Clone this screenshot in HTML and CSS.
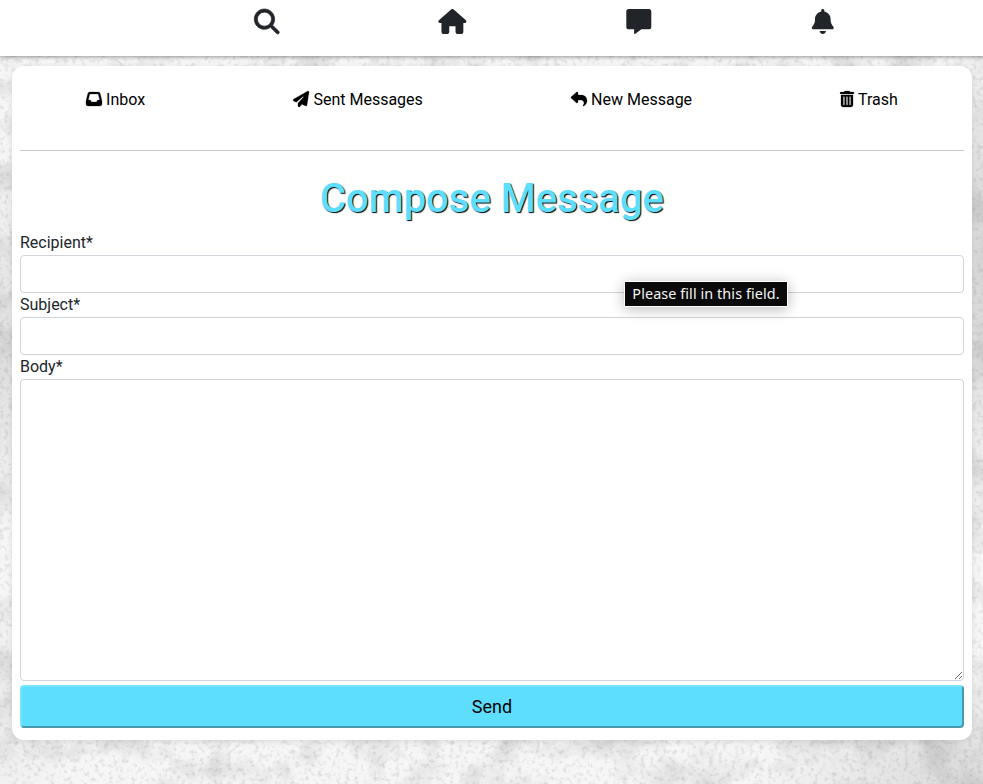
FILE: index.html
```html
<!DOCTYPE html>
<html lang="en">
<head>
<meta charset="utf-8">
<title>Compose Message</title>
<link rel="stylesheet" href="styles.css">
</head>
<body>
<svg class="texture" aria-hidden="true">
  <filter id="grain" x="0" y="0" width="100%" height="100%" color-interpolation-filters="sRGB">
    <feTurbulence type="fractalNoise" baseFrequency="0.025" numOctaves="5" seed="8" result="cloud"/>
    <feColorMatrix in="cloud" type="matrix" values="0 0 0 0 .4  0 0 0 0 .4  0 0 0 0 .4  .5 0 0 0 -.23" result="soft"/>
    <feTurbulence type="fractalNoise" baseFrequency="0.22" numOctaves="3" seed="3" result="fine"/>
    <feColorMatrix in="fine" type="matrix" values="0 0 0 0 .4  0 0 0 0 .4  0 0 0 0 .4  .5 0 0 0 -.25" result="specks"/>
    <feMerge><feMergeNode in="soft"/><feMergeNode in="specks"/></feMerge>
  </filter>
  <rect width="100%" height="100%" filter="url(#grain)"/>
</svg>
<header class="topbar">
  <nav class="topnav">
    <a><svg class="search" viewBox="0 0 512 512"><path d="M416 208c0 45.900-14.900 88.300-40 122.700L502.600 457.400c12.500 12.500 12.500 32.800 0 45.300s-32.800 12.500-45.300 0L330.700 376c-34.400 25.200-76.800 40-122.700 40C93.100 416 0 322.900 0 208S93.100 0 208 0S416 93.100 416 208zM208 352a144 144 0 1 0 0-288 144 144 0 1 0 0 288z"/></svg></a>
    <a><svg class="wide" viewBox="0 0 576 512"><path d="M309 7 565 231c20 18 9 57-21 57h-32v176c0 27-21 48-48 48h-64c-26 0-48-21-48-48V352H224v112c0 27-22 48-48 48h-64c-27 0-48-21-48-48V288H32c-30 0-43-37-21-57L267 7c12-10 30-10 42 0z"/></svg></a>
    <a><svg viewBox="0 0 512 512"><path d="M48 0C20 0 0 20 0 48V368c0 28 20 48 48 48h112v80c0 6.100 3.400 11.600 8.800 14.300s11.900 2.100 16.800-1.500L309.300 416H464c28 0 48-20 48-48V48c0-28-20-48-48-48H48z"/></svg></a>
    <a><svg viewBox="-32 0 512 512"><path d="M224 0c-17.700 0-32 14.300-32 32V51.200C119 66 64 130.600 64 208v18.800c0 47-17.300 92.400-48.500 127.600l-7.400 8.300c-8.400 9.400-10.400 22.900-5.300 34.400S19.400 416 32 416H416c12.600 0 24-7.400 29.200-18.900s3.100-25-5.300-34.400l-7.400-8.300C401.300 319.200 384 273.900 384 226.800V208c0-77.400-55-142-128-156.800V32c0-17.700-14.300-32-32-32zm45.300 493.300c12-12 18.700-28.300 18.700-45.300H224 160c0 17 6.700 33.300 18.700 45.300s28.300 18.700 45.300 18.700s33.300-6.700 45.300-18.700z"/></svg></a>
  </nav>
</header>
<main class="card">
  <nav class="mailnav">
    <a><svg viewBox="0 0 512 512"><path d="M121 32C91.600 32 66 52 58.900 80.500L1.900 308.400C.6 313.500 0 318.700 0 323.900V416c0 35.300 28.700 64 64 64H448c35.300 0 64-28.700 64-64V323.900c0-5.200-.6-10.400-1.900-15.500l-57-227.900C446 52 420.400 32 391 32H121zm0 64H391l48 192H387.800c-12.100 0-23.200 6.800-28.600 17.700l-14.300 28.600c-5.400 10.800-16.500 17.700-28.600 17.700H195.800c-12.100 0-23.200-6.800-28.600-17.700l-14.300-28.600c-5.400-10.800-16.500-17.700-28.600-17.700H73L121 96z"/></svg> Inbox</a>
    <a><svg viewBox="0 0 512 512"><path d="M498.100 5.600c10.100 7 15.400 19.100 13.500 31.200l-64 416c-1.500 9.700-7.400 18.200-16 23s-18.900 5.400-28 1.600L284 427.700l-68.500 74.100c-8.900 9.700-22.900 12.900-35.200 8.100S160 493.200 160 480V396.400c0-4 1.500-7.800 4.200-10.700L331.800 202.800c5.800-6.300 5.600-16-.4-22s-15.700-6.400-22-.7L106 360.800 17.700 316.600C7.100 311.300 .3 300.700 0 288.900s5.900-22.800 16.100-28.700l448-256c10.700-6.100 23.900-5.500 34 1.400z"/></svg> Sent Messages</a>
    <a><svg viewBox="0 0 512 512"><path d="M205 34.800c11.500 5.100 19 16.600 19 29.200v64H336c97.200 0 176 78.800 176 176c0 113.300-81.500 163.900-100.200 174.100c-2.500 1.400-5.300 1.900-8.100 1.900c-10.900 0-19.700-8.900-19.700-19.700c0-7.500 4.300-14.400 9.800-19.500c9.400-8.800 22.200-26.400 22.200-56.700c0-53-43-96-96-96H224v64c0 12.600-7.400 24.100-19 29.200s-25 3-34.400-5.400l-160-144C3.900 225.700 0 217.100 0 208s3.900-17.700 10.600-23.800l160-144c9.400-8.500 22.900-10.600 34.400-5.400z"/></svg> New Message</a>
    <a><svg class="narrow" viewBox="0 0 448 512"><path fill-rule="evenodd" d="M136 18c5-11 17-18 29-18h118c12 0 24 7 29 18l8 14h96c18 0 32 14 32 32s-14 32-32 32H32C14 96 0 82 0 64s14-32 32-32h96zM32 128h384v320c0 35-29 64-64 64H96c-35 0-64-29-64-64zM104 188v250c0 20 44 20 44 0V188c0-20-44-20-44 0zM202 188v250c0 20 44 20 44 0V188c0-20-44-20-44 0zM300 188v250c0 20 44 20 44 0V188c0-20-44-20-44 0z"/></svg> Trash</a>
  </nav>
  <hr>
  <h1>Compose Message</h1>
  <form>
    <label for="recipient">Recipient*</label>
    <div class="field">
      <input id="recipient" type="text">
      <div class="tooltip" role="tooltip">Please fill in this field.</div>
    </div>
    <label for="subject">Subject*</label>
    <input id="subject" type="text">
    <label for="body">Body*</label>
    <textarea id="body"></textarea>
    <button type="button">Send</button>
  </form>
</main>
</body>
</html>
```
FILE: styles.css
```css
* { box-sizing: border-box; }
html, body { height: 100%; }
body {
  margin: 0;
  overflow: hidden;
  font: 16px/24px Roboto, "Liberation Sans", sans-serif;
  color: #212529;
  background:
    radial-gradient(ellipse 45px 190px at 0 350px, rgba(0,0,0,.1), transparent),
    radial-gradient(ellipse 90px 110px at 0 710px, rgba(0,0,0,.05), transparent),
    radial-gradient(ellipse 230px 120px at 100% 100%, rgba(0,0,0,.12), transparent),
    radial-gradient(ellipse 40px 260px at 100% 260px, rgba(0,0,0,.14), transparent),
    #f6f6f6;
}
.texture {
  position: absolute;
  inset: 0;
  width: 100%;
  height: 100%;
  z-index: -1;
}
.topbar {
  height: 56px;
  padding-top: 9px;
  background: #fff;
  box-shadow: 0 1px 4px rgba(0,0,0,.4);
}
.topnav {
  display: grid;
  grid-template-columns: repeat(3, 186px) 183px;
  margin-left: 173.400px;
}
.topnav a { display: flex; justify-content: center; }
.topnav svg { width: 25.600px; height: 25px; fill: #212529; overflow: visible; }
.topnav .wide { width: 28.800px; }
.topnav .search { stroke: #212529; stroke-width: 14; }
.card {
  width: 960px;
  height: 674px;
  margin: 10px 0 0 12px;
  padding: 0 8px;
  background: #fff;
  border-radius: 12px;
  box-shadow: 0 2px 6px rgba(0,0,0,.1);
}
.mailnav {
  display: flex;
  justify-content: space-around;
  height: 84px;
  margin: 0 -8px;
  padding-top: 22px;
  color: #000;
}
.mailnav a { white-space: nowrap; }
.mailnav svg { width: 16px; height: 16px; vertical-align: -2px; stroke: #000; stroke-width: 8; overflow: visible; }
.mailnav .narrow { width: 14px; }
hr { margin: 0; border: 0; border-top: 1px solid #c8c9ca; }
h1 {
  margin: 24px 0 8px;
  font-size: 40px;
  line-height: 48px;
  font-weight: 500;
  text-align: center;
  color: #5ddeff;
  text-shadow: 1px 1px 1px #000;
}
label { display: block; }
form label { height: 24px; }
input, textarea {
  display: block;
  width: 100%;
  height: 38px;
  padding: 6px 12px;
  border: 1px solid #ced4da;
  border-radius: 4px;
  background: #fff;
  font: inherit;
}
input { outline: 0; }
textarea { height: 302px; }
.field { position: relative; }
.tooltip {
  position: absolute;
  left: 604px;
  top: 26px;
  width: 164px;
  height: 26px;
  border: 1px solid #fff;
  background: #0a0a0a;
  color: #f5f5f5;
  font: 14.400px/24px "Noto Sans", sans-serif;
  text-align: center;
  letter-spacing: .080px;
  white-space: nowrap;
  box-shadow: 0 2px 14px rgba(0,0,0,.28);
}
button {
  display: block;
  width: 100%;
  height: 43px;
  margin-top: 4px;
  padding: 0;
  border: 2px solid;
  border-color: #76e3ff #4a9aae #4a9aae #76e3ff;
  border-radius: 4px;
  background: #5ddeff;
  color: #000;
  font: 18px/27px Roboto, sans-serif;
}
```
